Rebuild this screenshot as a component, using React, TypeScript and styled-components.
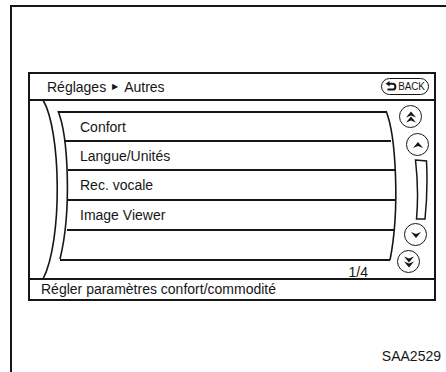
import React from "react"
import styled, { createGlobalStyle } from "styled-components"

const ink = "#161616"

const GlobalStyle = createGlobalStyle`
  body {
    margin: 0;
    background: #fff;
    font-family: "Liberation Sans", Arial, sans-serif;
    color: ${ink};
  }
`

const Page = styled.div`
  width: 446px;
  height: 372px;
  box-sizing: border-box;
  padding: 5px 0 0 10px;
  overflow: hidden;
`

const Frame = styled.div`
  height: 367px;
  box-sizing: border-box;
  border-top: 2px solid ${ink};
  border-left: 2px solid ${ink};
  display: flex;
  flex-direction: column;
  align-items: flex-start;
  padding: 65px 0 0 16px;
`

const Screen = styled.div`
  width: 408px;
  height: 229px;
  box-sizing: border-box;
  border: 2px solid ${ink};
  display: flex;
  flex-direction: column;
`

const Header = styled.div`
  height: 27px;
  box-sizing: border-box;
  border-bottom: 2px solid ${ink};
  display: flex;
  align-items: center;
  justify-content: space-between;
  padding: 0 5px 0 17px;
  font-size: 14px;
`

const Crumb = styled.span`
  display: flex;
  align-items: center;
  gap: 6px;
`

const CrumbArrow = styled.span`
  font-size: 8px;
`

const BackButton = styled.div`
  width: 48px;
  height: 17px;
  box-sizing: border-box;
  border: 1.5px solid ${ink};
  border-radius: 9px;
  display: flex;
  align-items: center;
  justify-content: center;
  gap: 1px;
  font-size: 10px;
  letter-spacing: -0.2px;
`

const Body = styled.div`
  position: relative;
  height: 177px;
  display: flex;
`

const Curves = styled.svg`
  position: absolute;
  left: 0;
  top: 0;
  width: 404px;
  height: 177px;
  overflow: visible;
  pointer-events: none;
`

const ListArea = styled.div`
  width: 366px;
  padding-top: 10px;
  display: flex;
  flex-direction: column;
`

const Row = styled.div<{ $inset: number; $trim: number; $h: number }>`
  height: ${(p) => p.$h}px;
  box-sizing: border-box;
  margin: 0 ${(p) => p.$trim}px 0 ${(p) => p.$inset}px;
  padding-left: ${(p) => 50 - p.$inset}px;
  border-top: 2px solid ${ink};
  display: flex;
  align-items: center;
  font-size: 14px;
`

const PageNum = styled.div`
  margin-top: 5px;
  padding-right: 28px;
  text-align: right;
  font-size: 14px;
  line-height: 12px;
`

const Controls = styled.div`
  width: 37px;
  display: flex;
  flex-direction: column;
  align-items: flex-start;
`

const Knob = styled.div<{ $left: number; $gap: number }>`
  width: 23px;
  height: 23px;
  margin: ${(p) => p.$gap}px 0 0 ${(p) => p.$left}px;
  box-sizing: border-box;
  border: 1.6px solid ${ink};
  border-radius: 50%;
  display: flex;
  align-items: center;
  justify-content: center;
`

const Bar = styled.svg`
  width: 14px;
  height: 62px;
  margin: 3px 0 0 18px;
`

const Footer = styled.div`
  border-top: 2px solid ${ink};
  height: 19px;
  padding-left: 11px;
  font-size: 14px;
  line-height: 19px;
`

const Caption = styled.div`
  align-self: flex-end;
  margin: 47px 5px 0 0;
  font-size: 14px;
  line-height: 16px;
`

const rows = [
  { label: "Confort", inset: 28, trim: 10, h: 29 },
  { label: "Langue/Unités", inset: 34, trim: 5, h: 29 },
  { label: "Rec. vocale", inset: 38, trim: 1, h: 30 },
  { label: "Image Viewer", inset: 38, trim: 0, h: 30 },
  { label: "", inset: 37, trim: 1, h: 30 },
]

// filled arrowhead with a notched tail
const Head = ({ y }: { y: number }) => (
  <path d={`M-5 ${y + 3} L0 ${y - 3} L5 ${y + 3} L0 ${y + 1} Z`} fill={ink} />
)

const Arrow = ({ count, down }: { count: 1 | 2; down?: boolean }) => (
  <svg width="14" height="14" viewBox="-7 -7 14 14">
    <g transform={down ? "rotate(180)" : undefined}>
      {count === 1 ? <Head y={0} /> : (
        <>
          <Head y={-2.5} />
          <Head y={2.5} />
        </>
      )}
    </g>
  </svg>
)

const BackIcon = () => (
  <svg width="12" height="11" viewBox="0 0 12 11">
    <path d="M4 2.8 H7.5 A2.9 2.9 0 0 1 7.5 8.6 H2.5" fill="none" stroke={ink} strokeWidth="2" />
    <path d="M0.6 2.8 L4.6 0 L4.6 5.6 Z" fill={ink} />
  </svg>
)

const App: React.FC = () => (
  <>
    <GlobalStyle />
    <Page>
      <Frame>
        <Screen>
          <Header>
            <Crumb>
              Réglages <CrumbArrow>▶</CrumbArrow> Autres
            </Crumb>
            <BackButton>
              <BackIcon />
              BACK
            </BackButton>
          </Header>
          <Body>
            <Curves viewBox="0 0 404 177">
              <g fill="none" stroke={ink} strokeWidth="1.6">
                <path d="M13 -1 C31 29 33 139 13 178" />
                <path d="M28 10 C38 34 42 109 30 158" />
                <path d="M356 10 C366 34 370 109 360 159" />
              </g>
            </Curves>
            <ListArea>
              {rows.map((r, i) => (
                <Row key={i} $inset={r.inset} $trim={r.trim} $h={r.h}>
                  {r.label}
                </Row>
              ))}
              <Row $inset={30} $trim={6} $h={0} />
              <PageNum>1/4</PageNum>
            </ListArea>
            <Controls>
              <Knob $left={3} $gap={4}>
                <Arrow count={2} />
              </Knob>
              <Knob $left={10} $gap={5}>
                <Arrow count={1} />
              </Knob>
              <Bar viewBox="0 0 14 62">
                <path d="M1.5 1 L12.5 2 Q14 31 11 60 L2.5 60 Q5 31 1.5 1 Z" fill="none" stroke={ink} strokeWidth="1.5" />
              </Bar>
              <Knob $left={8} $gap={2}>
                <Arrow count={1} down />
              </Knob>
              <Knob $left={1} $gap={4}>
                <Arrow count={2} down />
              </Knob>
            </Controls>
          </Body>
          <Footer>Régler paramètres confort/commodité</Footer>
        </Screen>
        <Caption>SAA2529</Caption>
      </Frame>
    </Page>
  </>
)

export default App
